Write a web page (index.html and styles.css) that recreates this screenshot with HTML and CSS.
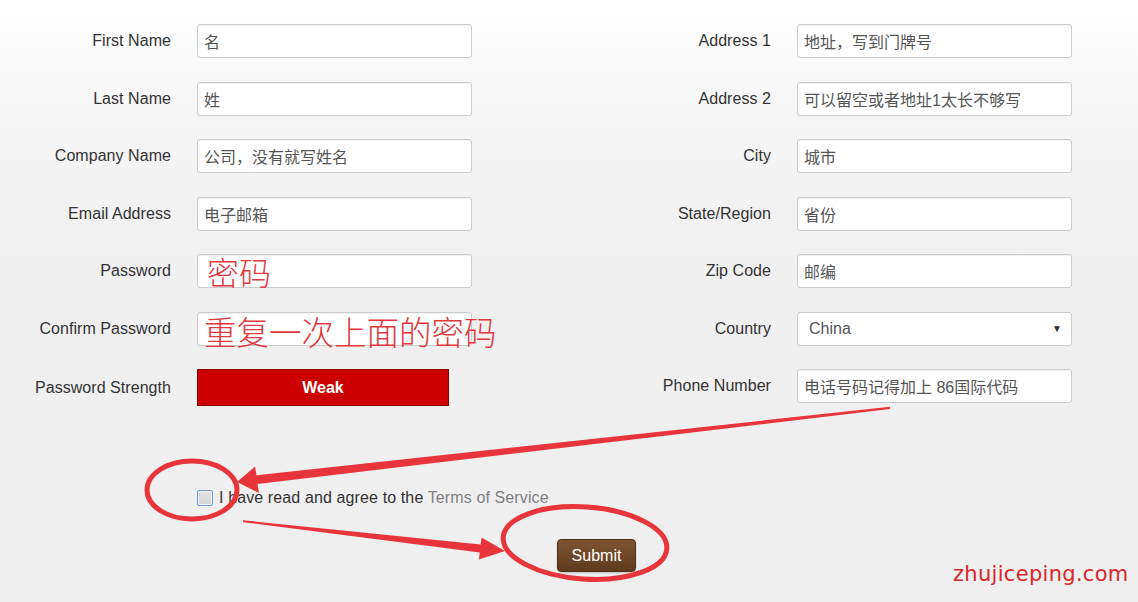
FILE: index.html
```html
<!DOCTYPE html>
<html lang="zh-CN">
<head>
<meta charset="utf-8">
<title>Register</title>
<link rel="stylesheet" href="styles.css">
</head>
<body>
<div class="page">
  <form class="form">
    <div class="cols">
      <div class="col">
        <div class="row"><label class="lbl">First Name</label><div class="field"><input class="inp" value="名"></div></div>
        <div class="row"><label class="lbl">Last Name</label><div class="field"><input class="inp" value="姓"></div></div>
        <div class="row"><label class="lbl">Company Name</label><div class="field"><input class="inp" value="公司，没有就写姓名"></div></div>
        <div class="row"><label class="lbl">Email Address</label><div class="field"><input class="inp" value="电子邮箱"></div></div>
        <div class="row"><label class="lbl">Password</label><div class="field"><input class="inp" type="password"><span class="note note-pw">密码</span></div></div>
        <div class="row"><label class="lbl">Confirm Password</label><div class="field"><input class="inp" type="password"><span class="note note-cf">重复一次上面的密码</span></div></div>
        <div class="row"><label class="lbl">Password Strength</label><div class="strength">Weak</div></div>
      </div>
      <div class="col">
        <div class="row"><label class="lbl">Address 1</label><div class="field"><input class="inp" value="地址，写到门牌号"></div></div>
        <div class="row"><label class="lbl">Address 2</label><div class="field"><input class="inp" value="可以留空或者地址1太长不够写"></div></div>
        <div class="row"><label class="lbl">City</label><div class="field"><input class="inp" value="城市"></div></div>
        <div class="row"><label class="lbl">State/Region</label><div class="field"><input class="inp" value="省份"></div></div>
        <div class="row"><label class="lbl">Zip Code</label><div class="field"><input class="inp" value="邮编"></div></div>
        <div class="row"><label class="lbl">Country</label><div class="field"><div class="select"><span>China</span><span class="caret">▼</span></div></div></div>
        <div class="row"><label class="lbl">Phone Number</label><div class="field"><input class="inp" value="电话号码记得加上 86国际代码"></div></div>
      </div>
    </div>
    <div class="agree"><span class="box"></span><span class="agree-text">I have read and agree to the <a class="tos">Terms of Service</a></span></div>
    <div class="actions"><button type="button" class="submit">Submit</button></div>
  </form>

  <svg class="marks" width="1138" height="602" viewBox="0 0 1138 602">
    <polygon fill="#e8353b" points="890,406.8 256.5,475.2 255,466.5 237,482 259,493 257.5,484 890,409"/>
    <polygon fill="#e8353b" points="243,520.3 480.7,544.5 481.5,537.5 505,551 478.9,559.5 479.7,552.5 243,522.2"/>
    <ellipse cx="192" cy="490" rx="45" ry="29" fill="none" stroke="#e8353b" stroke-width="5"/>
    <ellipse cx="585" cy="543" rx="82" ry="36" fill="none" stroke="#e8353b" stroke-width="5" transform="rotate(4 585 543)"/>
  </svg>
  <div class="watermark">zhujiceping.com</div>
</div>
</body>
</html>
```

FILE: styles.css
```css
html, body {
  margin: 0;
  padding: 0;
}
body {
  font-family: "Liberation Sans", Arial, "Noto Sans CJK SC", sans-serif;
  font-size: 16px;
  color: #333;
  background: #f0f0f0;
}
.page {
  position: relative;
  width: 1138px;
  height: 602px;
  overflow: hidden;
  background: linear-gradient(to bottom, #ffffff 0, #f6f6f6 120px, #f0f0f0 260px, #efefef 602px);
}
.form {
  padding-top: 24px;
}
.cols {
  display: grid;
  grid-template-columns: 600px 538px;
}
.col {
  display: flex;
  flex-direction: column;
  gap: 23.5px;
}
.row {
  display: flex;
  align-items: center;
  min-height: 34px;
}
.lbl {
  width: 171px;
  text-align: right;
  margin-right: 26px;
  color: #333;
  font-size: 16px;
  letter-spacing: 0.05px;
}
.field {
  position: relative;
  width: 275px;
  height: 34px;
}
.inp {
  box-sizing: border-box;
  width: 275px;
  height: 34px;
  margin: 0;
  padding: 0 6px;
  border: 1px solid #cccccc;
  border-radius: 3px;
  background: #fff;
  box-shadow: inset 0 1px 1px rgba(0,0,0,0.06);
  font-family: "Liberation Sans", Arial, "Noto Sans CJK SC", sans-serif;
  font-size: 16px;
  color: #555;
  outline: none;
}
.note {
  position: absolute;
  white-space: nowrap;
  color: #e2393f;
  font-family: "Noto Sans CJK SC", sans-serif;
  font-weight: 300;
  line-height: 1;
  pointer-events: none;
}
.note-pw {
  left: 10px;
  top: 1px;
  font-size: 32px;
}
.note-cf {
  left: 7px;
  top: 3px;
  font-size: 32.5px;
}
.strength {
  box-sizing: border-box;
  width: 252px;
  height: 37px;
  background: #cc0000;
  border: 1px solid #8a0000;
  color: #fff;
  font-weight: bold;
  font-size: 16px;
  display: flex;
  align-items: center;
  justify-content: center;
}
.select {
  box-sizing: border-box;
  width: 275px;
  height: 34px;
  border: 1px solid #cccccc;
  border-radius: 3px;
  background: #fff;
  display: flex;
  align-items: center;
  justify-content: space-between;
  padding: 0 9px 0 11px;
  color: #555;
  font-size: 16px;
}
.caret {
  font-size: 10px;
  color: #333;
}
.agree {
  margin-top: 82px;
  padding-left: 197px;
  display: flex;
  align-items: center;
  gap: 6px;
  height: 20px;
  font-size: 16px;
  color: #333;
}
.agree-text {
  letter-spacing: 0.12px;
}
.box {
  box-sizing: border-box;
  width: 16px;
  height: 16px;
  border: 1px solid #6f9ade;
  border-radius: 2px;
  background: linear-gradient(#e4e4e4, #d4d4d4);
  box-shadow: inset 0 0 0 1px #f4f4f4;
}
.tos {
  color: #808080;
}
.actions {
  margin-top: 31px;
  padding-left: 557px;
}
.submit {
  width: 79px;
  height: 33px;
  border: 1px solid #4e3218;
  border-radius: 4px;
  background: linear-gradient(to bottom, #7e5533, #5e3b1d);
  color: #fff;
  font-family: "Liberation Sans", Arial, sans-serif;
  font-size: 16px;
  padding: 0;
  box-shadow: 0 1px 2px rgba(0,0,0,0.2);
}
.marks {
  position: absolute;
  left: 0;
  top: 0;
  pointer-events: none;
}
.watermark {
  position: absolute;
  left: 953px;
  top: 562px;
  font-family: "DejaVu Sans", sans-serif;
  font-size: 21px;
  color: #d9262b;
  letter-spacing: 0.3px;
}
```
